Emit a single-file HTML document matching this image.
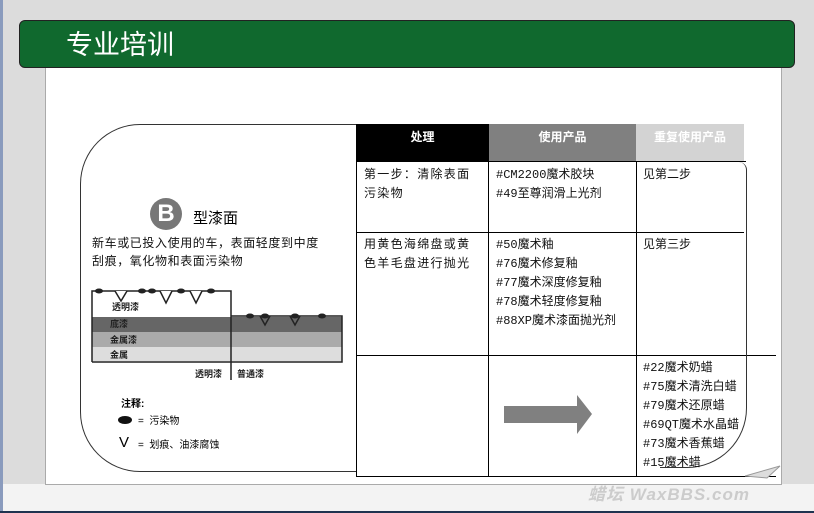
<!DOCTYPE html>
<html><head><meta charset="utf-8"><style>
body{margin:0;width:814px;height:513px;position:relative;overflow:hidden;background:#dcdcdc;font-family:"Liberation Sans","Noto Sans CJK SC",sans-serif;}
.a{position:absolute;}
.t{font-size:12px;line-height:19px;color:#111;font-family:"Liberation Mono","Noto Sans CJK SC",monospace;}
</style></head><body>
<div class="a" style="left:0;top:0;width:3px;height:513px;background:#8a9bbd"></div>
<div class="a" style="left:3px;top:484px;width:811px;height:27px;background:#f3f3f3"></div>
<div class="a" style="left:0;top:511px;width:814px;height:2px;background:#1f3350"></div>
<div class="a" style="left:45px;top:60px;width:735px;height:423px;background:#fff;border:1px solid #aaa"></div>
<div class="a" style="left:19px;top:20px;height:46px;background:#10692e;border:1px solid #222;border-radius:6px;width:774px"></div>
<div class="a" style="left:66px;top:28px;font-size:27px;color:#fff;line-height:34px">专业培训</div>

<div class="a" style="left:80px;top:124px;width:276px;height:346px;border:1px solid #333;border-right:none;border-radius:60px 0 0 60px"></div>
<div class="a" style="left:150px;top:198px;width:32px;height:32px;border-radius:50%;background:#777;color:#fff;font-weight:bold;font-size:24px;text-align:center;line-height:32px">B</div>
<div class="a" style="left:193px;top:207px;font-size:15px">型漆面</div>
<div class="a" style="left:92px;top:234px;width:236px;font-size:12px;line-height:18px;letter-spacing:0.6px;color:#111">新车或已投入使用的车，表面轻度到中度刮痕，氧化物和表面污染物</div>

<svg class="a" style="left:90px;top:285px" width="260" height="100">
<rect x="2" y="32" width="250" height="15" fill="#666"/>
<rect x="2" y="47" width="250" height="15" fill="#aaa"/>
<rect x="2" y="62" width="250" height="14" fill="#ddd"/>
<rect x="2" y="6" width="139" height="26" fill="#fff"/>
<path d="M2 77 V6 H141 V95 M141 31 H252 V77 H2" fill="none" stroke="#222" stroke-width="1.5"/>
<path d="M25 6 l6 10 6-10 M70 6 l6 12 6-12 M100 6 l6 12 6-12" stroke="#222" fill="#fff" stroke-width="1.5"/>
<path d="M170 31 l5 9 5-9 M200 31 l5 9 5-9" stroke="#222" fill="#666" stroke-width="1.5"/>
<g fill="#222"><ellipse cx="9" cy="6" rx="4" ry="2.5"/><ellipse cx="52" cy="6" rx="4" ry="2.5"/><ellipse cx="62" cy="6" rx="4" ry="2.5"/><ellipse cx="91" cy="6" rx="4" ry="2.5"/><ellipse cx="121" cy="6" rx="4" ry="2.5"/><ellipse cx="160" cy="31" rx="4" ry="2.5"/><ellipse cx="175" cy="31" rx="4" ry="2.5"/><ellipse cx="205" cy="31" rx="4" ry="2.5"/><ellipse cx="232" cy="31" rx="4" ry="2.5"/></g>
<g font-size="9" font-weight="bold" fill="#222"><text x="22" y="25">透明漆</text><text x="20" y="42">底漆</text><text x="20" y="58">金属漆</text><text x="20" y="73">金属</text><text x="105" y="92">透明漆</text><text x="147" y="92">普通漆</text></g>
</svg>
<div class="a" style="left:121px;top:395px;font-size:10px;font-weight:bold">注释:</div>
<div class="a" style="left:118px;top:416px;width:14px;height:8px;border-radius:50%;background:#111"></div>
<div class="a" style="left:138px;top:412px;font-size:10px">=&nbsp; 污染物</div>
<div class="a" style="left:119px;top:434px;font-size:15px;line-height:18px">V</div>
<div class="a" style="left:138px;top:436px;font-size:10px">=&nbsp; 划痕、油漆腐蚀</div>

<div class="a" style="left:356px;top:124px;width:133px;height:37px;background:#000;color:#fff;font-weight:bold;font-size:12px;text-align:center;line-height:26px">处理</div>
<div class="a" style="left:489px;top:124px;width:147px;height:37px;background:#808080;color:#fff;font-weight:bold;font-size:12px;text-align:center;line-height:26px">使用产品</div>
<div class="a" style="left:636px;top:124px;width:108px;height:37px;background:#d3d3d3;color:#fff;font-weight:bold;font-size:12px;text-align:center;line-height:26px">重复使用产品</div>
<div class="a" style="left:356px;top:161px;width:1px;height:315px;background:#000"></div>
<div class="a" style="left:488px;top:161px;width:1px;height:315px;background:#000"></div>
<div class="a" style="left:636px;top:161px;width:1px;height:315px;background:#000"></div>
<div class="a" style="left:356px;top:161px;width:390px;height:1px;background:#000"></div>
<div class="a" style="left:356px;top:232px;width:388px;height:1px;background:#000"></div>
<div class="a" style="left:356px;top:355px;width:420px;height:1px;background:#000"></div>
<div class="a" style="left:356px;top:476px;width:420px;height:1px;background:#000"></div>
<div class="a" style="left:660px;top:162px;width:86px;height:305px;border-right:1px solid #333;border-bottom:1px solid #333;border-radius:0 8px 60px 0"></div>
<svg class="a" style="left:745px;top:462px" width="40" height="20"><path d="M0 14 L35 4 L22 16 Z" fill="#ddd" stroke="#999"/></svg>

<div class="a t" style="left:364px;top:166px;width:118px;letter-spacing:1.3px">第一步：清除表面污染物</div>
<div class="a t" style="left:364px;top:236px;width:118px;letter-spacing:1.3px">用黄色海绵盘或黄色羊毛盘进行抛光</div>
<div class="a t" style="left:496px;top:166px">#CM2200魔术胶块<br>#49至尊润滑上光剂</div>
<div class="a t" style="left:496px;top:236px">#50魔术釉<br>#76魔术修复釉<br>#77魔术深度修复釉<br>#78魔术轻度修复釉<br>#88XP魔术漆面抛光剂</div>
<div class="a t" style="left:643px;top:166px">见第二步</div>
<div class="a t" style="left:643px;top:236px">见第三步</div>
<div class="a t" style="left:643px;top:359px">#22魔术奶蜡<br>#75魔术清洗白蜡<br>#79魔术还原蜡<br>#69QT魔术水晶蜡<br>#73魔术香蕉蜡<br>#15魔术蜡</div>
<svg class="a" style="left:503px;top:394px" width="90" height="42"><path d="M1 12 H74 V1 L89 20 L74 40 V29 H1 Z" fill="#808080"/></svg>
<div class="a" style="left:588px;top:480px;font-size:17px;font-weight:bold;color:#ccc;letter-spacing:1px;font-style:italic">蜡坛 WaxBBS.com</div>
</body></html>
